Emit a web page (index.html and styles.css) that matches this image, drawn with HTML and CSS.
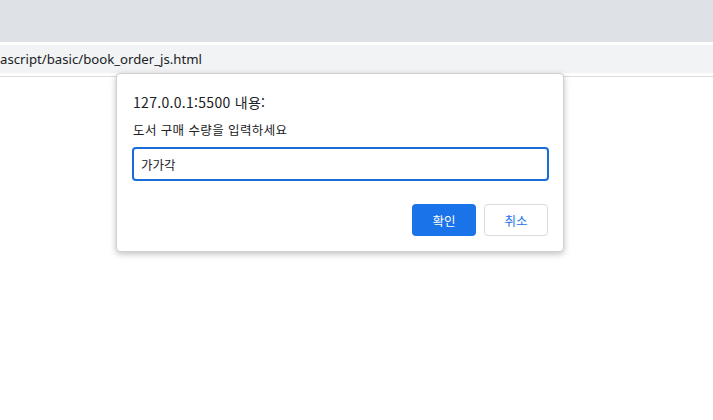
FILE: index.html
```html
<!DOCTYPE html>
<html lang="ko">
<head>
    <meta charset="UTF-8">
    <meta name="viewport" content="width=device-width, initial-scale=1.0">
    <title>book order</title>
    <link rel="stylesheet" href="styles.css">
</head>
<body>
    <div class="tab-strip"></div>
    <div class="toolbar">
        <div class="address-bar">ascript/basic/book_order_js.html</div>
    </div>
    <div class="page">
        <div class="dialog">
            <div class="dialog-title">127.0.0.1:5500 내용:</div>
            <div class="dialog-message">도서 구매 수량을 입력하세요</div>
            <input type="text" class="dialog-input" value="가가각">
            <div class="dialog-buttons">
                <button class="btn btn-ok">확인</button>
                <button class="btn btn-cancel">취소</button>
            </div>
        </div>
    </div>
</body>
</html>
```

FILE: styles.css
```css
body {
    margin: 0;
    font-family: "Noto Sans", "Noto Sans CJK KR", sans-serif;
    background-color: white;
    width: 713px;
    height: 420px;
    overflow: hidden;
}
.tab-strip {
    height: 42px;
    background-color: #dee1e6;
}
.toolbar {
    height: 31px;
    padding-top: 3px;
    background-color: white;
    border-bottom: 1px solid #dadce0;
}
.address-bar {
    height: 28px;
    line-height: 28px;
    background-color: #f1f3f4;
    font-size: 13.2px;
    color: #202124;
    white-space: nowrap;
}
.page {
    position: relative;
}
.dialog {
    position: absolute;
    top: -4px;
    left: 116px;
    width: 448px;
    height: 179px;
    box-sizing: border-box;
    padding: 18px 15px 0 16px;
    background-color: white;
    border-radius: 4px;
    border: 1px solid #d0d0d0;
    box-shadow: 0px 2px 6px rgba(0, 0, 0, 0.25);
    font-family: "Noto Sans CJK KR", sans-serif;
}
.dialog-title {
    font-size: 14px;
    letter-spacing: 0.3px;
    color: #202124;
    line-height: 20px;
}
.dialog-message {
    margin-top: 9px;
    font-size: 12.5px;
    letter-spacing: 0.4px;
    color: #202124;
    line-height: 18px;
}
.dialog-input {
    display: block;
    margin-top: 8px;
    margin-left: -1px;
    width: 417px;
    height: 34px;
    box-sizing: border-box;
    border: 2px solid #1a6cd8;
    border-radius: 4px;
    padding: 0 7px;
    font-family: "Noto Sans CJK KR", sans-serif;
    font-size: 12.5px;
    color: #202124;
    outline: none;
}
.dialog-buttons {
    display: flex;
    justify-content: flex-end;
    gap: 8px;
    margin-top: 23px;
}
.btn {
    width: 64px;
    height: 32px;
    border-radius: 4px;
    font-family: "Noto Sans CJK KR", sans-serif;
    font-size: 12.5px;
    cursor: pointer;
}
.btn-ok {
    background-color: #1a73e8;
    border: none;
    color: white;
}
.btn-cancel {
    background-color: white;
    border: 1px solid #dadce0;
    color: #1a73e8;
}
```
